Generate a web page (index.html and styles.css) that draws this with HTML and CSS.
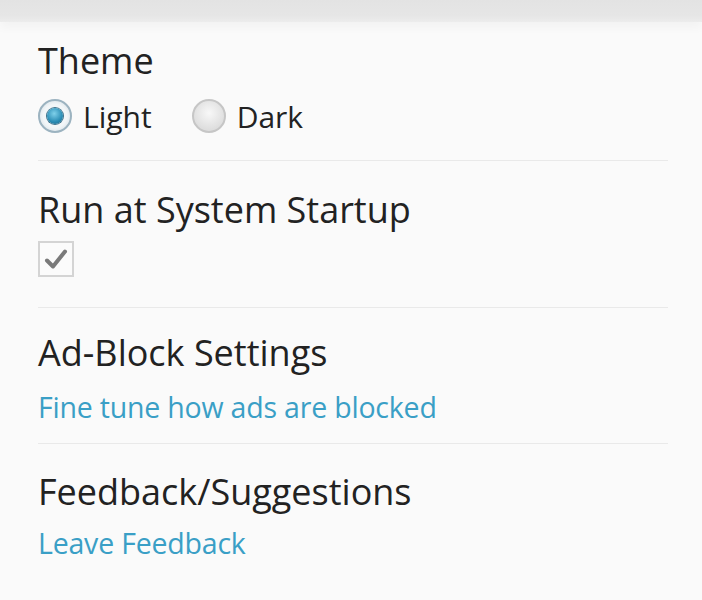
FILE: index.html
```html
<!DOCTYPE html>
<html>
<head>
<meta charset="utf-8">
<link rel="stylesheet" href="styles.css">
</head>
<body>
<div class="topband"></div>
<main class="settings">
  <section class="group g-theme">
    <h2 class="title">Theme</h2>
    <div class="radios">
      <label class="radio"><span class="dot on"></span><span>Light</span></label>
      <label class="radio"><span class="dot"></span><span>Dark</span></label>
    </div>
  </section>
  <section class="group g-startup">
    <h2 class="title">Run at System Startup</h2>
    <span class="check"><svg width="24" height="22" viewBox="0 0 24 22"><path d="M3 12.5 L9 18.5 L21 3.5" fill="none" stroke="#7a7a7a" stroke-width="4" stroke-linecap="round" stroke-linejoin="round"/></svg></span>
  </section>
  <section class="group g-adblock">
    <h2 class="title">Ad-Block Settings</h2>
    <a class="link">Fine tune how ads are blocked</a>
  </section>
  <section class="group g-feedback last">
    <h2 class="title">Feedback/Suggestions</h2>
    <a class="link">Leave Feedback</a>
  </section>
</main>
</body>
</html>
```
FILE: styles.css
```css
html, body {
  margin: 0;
  padding: 0;
  background: #fafafa;
  font-family: "Open Sans", "Noto Sans", "Liberation Sans", sans-serif;
  color: #1e1e1e;
}
.topband {
  height: 22px;
  background: linear-gradient(#e3e3e3, #e6e6e6 70%, #ececec);
  box-shadow: 0 6px 10px rgba(0,0,0,0.03);
}
.settings {
  padding: 0 34px 0 38px;
}
.group {
  display: flex;
  flex-direction: column;
  align-items: flex-start;
  border-bottom: 1px solid #e9e9e9;
}
.group.last { border-bottom: none; }
.title {
  margin: 0;
  font-size: 36px;
  font-weight: 400;
  line-height: 40px;
  height: 40px;
  color: #222;
  letter-spacing: 0;
}
.g-theme { padding: 19px 0 26px; }
.g-theme .radios { margin-top: 17px; }
.g-startup { padding: 29px 0 30px; }
.g-startup .check { margin-top: 11px; }
.g-adblock { padding: 25px 0 19px; }
.g-adblock .link { margin-top: 17px; }
.g-feedback { padding: 28px 0 20px; }
.g-feedback .link { margin-top: 14px; }

.radios {
  display: flex;
  gap: 40px;
  height: 36px;
  align-items: center;
}
.radio {
  display: flex;
  align-items: center;
  gap: 11px;
  font-size: 30px;
  color: #222;
}
.dot {
  width: 34px;
  height: 34px;
  box-sizing: border-box;
  border-radius: 50%;
  border: 2px solid #c6c6c6;
  background: radial-gradient(circle at 50% 40%, #f8f8f8, #dedede 70%);
  display: flex;
  align-items: center;
  justify-content: center;
}
.dot.on {
  border-color: #9cb3c0;
  background: radial-gradient(circle, #f2f6f8 55%, #c9d6de 100%);
}
.dot.on::after {
  content: "";
  width: 16px;
  height: 16px;
  border-radius: 50%;
  background: radial-gradient(circle at 45% 35%, #7fd0ea, #2a8db5 60%, #1b5f80);
  box-shadow: 0 0 0 1px #3b6f88;
}
.check {
  width: 36px;
  height: 36px;
  box-sizing: border-box;
  border: 2px solid #d4d4d4;
  background: #fbfbfb;
  display: flex;
  align-items: center;
  justify-content: center;
}
.link {
  font-size: 28.5px;
  line-height: 34px;
  height: 34px;
  color: #3a9fc6;
  text-decoration: none;
  letter-spacing: -0.2px;
}
```
